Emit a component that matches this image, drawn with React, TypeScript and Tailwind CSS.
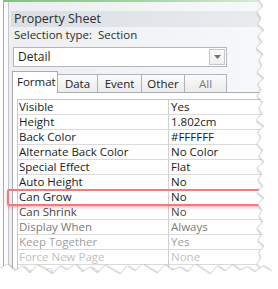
import React from "react";

const rows: { k: string; v: string; c: string }[] = [
  { k: "Visible", v: "Yes", c: "text-[#1a1a1a]" },
  { k: "Height", v: "1.802cm", c: "text-[#1a1a1a]" },
  { k: "Back Color", v: "#FFFFFF", c: "text-[#1a1a1a]" },
  { k: "Alternate Back Color", v: "No Color", c: "text-[#1a1a1a]" },
  { k: "Special Effect", v: "Flat", c: "text-[#1a1a1a]" },
  { k: "Auto Height", v: "No", c: "text-[#1a1a1a]" },
  { k: "Can Grow", v: "No", c: "text-[#222]" },
  { k: "Can Shrink", v: "No", c: "text-[#444]" },
  { k: "Display When", v: "Always", c: "text-[#7a7a7a]" },
  { k: "Keep Together", v: "Yes", c: "text-[#a0a0a0]" },
  { k: "Force New Page", v: "None", c: "text-[#c0c0c0]" },
  { k: "New Row Or Col", v: "None", c: "text-[#dcdcdc]" },
];

function tearRight() {
  const xs = [259, 263, 257, 261, 258, 264, 258, 262, 256, 263, 259, 262, 257, 264, 258, 261, 257, 263, 259, 262, 256, 264, 258, 261, 257, 263, 259, 264, 257, 262, 258, 263, 257, 264, 258, 262, 259, 263, 257, 262, 258, 264, 259, 261, 257, 263, 258, 262];
  return xs.map((x, i) => `${x},${i * 6}`).join(" ");
}

function tearBottom() {
  const ys = [268, 264, 271, 266, 273, 265, 269, 274, 266, 270, 264, 272, 267, 273, 265, 270, 274, 266, 271, 264, 269, 273, 265, 270, 267, 272, 264, 269, 274, 266, 271, 265, 270, 267, 272, 266, 270];
  return ys.map((y, i) => `${i * 7.5},${y}`).join(" ");
}

export default function App() {
  const rp = tearRight();
  const bp = tearBottom();
  return (
    <div className="relative w-[278px] h-[289px] bg-white overflow-hidden font-['Open_Sans',sans-serif] text-[11px] leading-none">
      <div className="ml-[3px] w-[265px] h-[280px] border-l border-[#a8a8a8] pl-[4px] bg-[#fbfbfc]">
        <div className="h-full border-l border-[#c4c7cc] pl-[2px] flex flex-col bg-gradient-to-r from-[#eceef1] to-[#f7f8f9]">
          <div className="h-[2px] -ml-[7px] bg-gradient-to-r from-[#7fc37f] via-[#9fd49f] to-[#d8eed8]" />
          <div className="h-[10px]" />
          <div className="h-[16px] bg-gradient-to-r from-[#dadee4] to-[#e9ecef] flex items-center pl-[3px] text-[12.5px] leading-[16px] text-[#2e2e2e]">
            Property Sheet
          </div>
          <div className="h-[16px] flex items-center pl-[3px] text-[11.5px] leading-[16px] text-[#2e2e2e] whitespace-pre">
            Selection type:  Section
          </div>
          <div className="h-[4px]" />
          <div className="ml-[2px] w-[214px] h-[22px] bg-white border border-[#b3b6ba] flex items-center justify-between pl-[4px] pr-[1px]">
            <span className="text-[12px] leading-[16px] text-[#1e1e1e]">Detail</span>
            <div className="w-[16px] h-[16px] border border-[#c3c5c8] bg-gradient-to-b from-[#fafafa] to-[#eeeeee] flex items-center justify-center">
              <svg width="7" height="4" viewBox="0 0 7 4">
                <polygon points="0,0 7,0 3.5,4" fill="#707070" />
              </svg>
            </div>
          </div>
          <div className="h-[4px]" />
          <div className="flex items-end h-[22px] ml-[1px]">
            <div className="w-[46px] h-[22px] bg-white border border-b-0 border-[#a8abb0] flex items-start pt-[3px] pl-[4px] text-[11.5px] leading-[14px] text-[#1a1a1a] relative z-10">
              Format
            </div>
            <div className="w-[40px] h-[19px] bg-gradient-to-b from-[#fbfbfb] to-[#e9eaec] border border-b-0 border-l-0 border-[#b0b3b7] flex items-center justify-center text-[11.5px] leading-[14px] text-[#1a1a1a]">
              Data
            </div>
            <div className="w-[44px] h-[19px] bg-gradient-to-b from-[#fbfbfb] to-[#e9eaec] border border-b-0 border-l-0 border-[#b0b3b7] flex items-center justify-center text-[11.5px] leading-[14px] text-[#1a1a1a]">
              Event
            </div>
            <div className="w-[43px] h-[19px] bg-gradient-to-b from-[#fbfbfb] to-[#e9eaec] border border-b-0 border-l-0 border-[#b0b3b7] flex items-center justify-center text-[11.5px] leading-[14px] text-[#1a1a1a]">
              Other
            </div>
            <div className="w-[42px] h-[19px] bg-gradient-to-b from-[#fbfbfb] to-[#e9eaec] border border-b-0 border-l-0 border-[#b0b3b7] flex items-center justify-center text-[11.5px] leading-[14px] text-[#7a7a7a]">
              All
            </div>
          </div>
          <div className="flex-1 bg-white border-l border-t border-[#a8abb0] -mt-px pl-[4px] pt-[6px] ml-[1px]">
            <div className="border-l border-t border-[#c8c8c8]">
              {rows.map((r) => (
                <div key={r.k} className={`flex h-[15px] border-b border-[#dadada] text-[11.5px] leading-[14px] ${r.c}`}>
                  <div className="w-[151px] border-r border-[#d0d0d0] pl-[1px] flex items-center whitespace-nowrap">{r.k}</div>
                  <div className="flex-1 pl-[2px] flex items-center whitespace-nowrap">{r.v}</div>
                </div>
              ))}
            </div>
          </div>
        </div>
      </div>

      <div className="absolute left-[7px] top-[189px] w-[262px] h-[17px] rounded-[2px] border-2 border-[#f27a7a] shadow-[0_2px_3px_rgba(240,80,80,0.35)]" />

      <svg className="absolute left-0 top-0" width="278" height="289" viewBox="0 0 278 289">
        <defs>
          <filter id="sh" x="-10%" y="-10%" width="120%" height="120%">
            <feGaussianBlur stdDeviation="1" />
          </filter>
        </defs>
        <polyline points={rp} fill="none" stroke="#a8a8a8" strokeWidth="1.5" filter="url(#sh)" transform="translate(1,1)" />
        <polygon points={`${rp} 278,290 278,0`} fill="#ffffff" />
        <polyline points={rp} fill="none" stroke="#cfcfcf" strokeWidth="0.7" />
        <polyline points={bp} fill="none" stroke="#a8a8a8" strokeWidth="1.5" filter="url(#sh)" transform="translate(1,1)" />
        <polygon points={`${bp} 278,289 0,289`} fill="#ffffff" />
        <polyline points={bp} fill="none" stroke="#cfcfcf" strokeWidth="0.7" />
      </svg>
    </div>
  );
}
